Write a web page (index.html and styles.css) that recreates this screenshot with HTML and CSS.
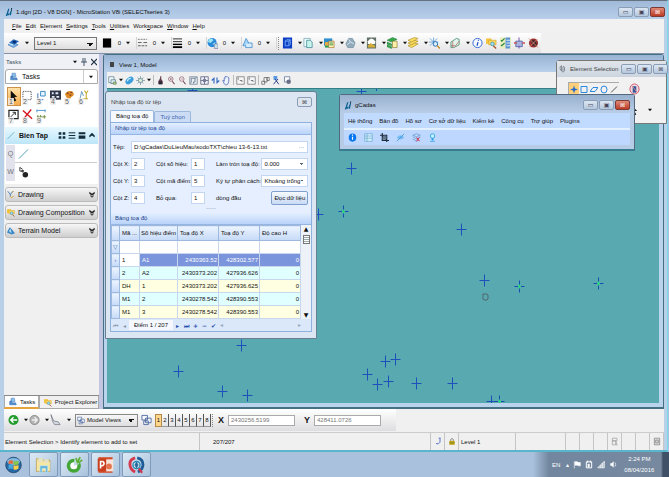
FILE: index.html
```html
<!DOCTYPE html>
<html lang="vi">
<head>
<meta charset="utf-8">
<title>1.dgn [2D - V8 DGN] - MicroStation V8i (SELECTseries 3)</title>
<link rel="stylesheet" href="styles.css">
</head>
<body>
<svg class="sprite" aria-hidden="true">
  <symbol id="logo" viewBox="0 0 10 10"><path d="M1 10 4 1h1.500L3.800 7h1.700L9 0 7.500 9H6L6.500 5.500 5 9H3L2.500 10z" fill="#075f94"/><path d="M7.500 0H9L7.500 5z" fill="#18384d"/></symbol>
  <symbol id="level" viewBox="0 0 12 12"><path d="M0 8 5 5l6 3-5 3z" fill="#7db3e6" stroke="#2c68ad" stroke-width=".6"/><path d="M1 6 6 2l6 2-5 4z" fill="#2368ba"/><path d="M5 4q3-1 4 1-2 2-3 1z" fill="#072a64"/><path d="m1 6 4 1 1 2-5-2z" fill="#d7edff"/></symbol>
  <symbol id="black" viewBox="0 0 12 12"><path d="M1 1h9v10H1z" fill="#000"/></symbol>
  <symbol id="dashes" viewBox="0 0 12 12"><path d="M1 2h10" stroke="#777" stroke-dasharray="2 1"/><path d="M1 5.500h10" stroke="#555" stroke-dasharray="4 2"/><path d="M1 9h10" stroke="#555" stroke-dasharray="3 1"/></symbol>
  <symbol id="weights" viewBox="0 0 12 12"><path d="M1 1.500h10M1 4.500h10" stroke="#222"/><path d="M1 7.500h10" stroke="#000" stroke-width="1.500"/><path d="M1 10.500h10" stroke="#000" stroke-width="2"/></symbol>
  <symbol id="globe" viewBox="0 0 12 12"><circle cx="5.500" cy="5.500" r="5" fill="#2a88d8"/><path d="M2 2q4-2 5 1L4 6 1 5zM6 7l3-2v4z" fill="#9be4f2"/><path d="M8 7h4v5H8z" fill="#c8dfe8" stroke="#558" stroke-width=".5"/></symbol>
  <symbol id="tri" viewBox="0 0 12 12"><path d="M4.500 1 9 9H1z" fill="#a5d6f8" stroke="#3a85c8" stroke-width=".8"/><path d="M6 6h5v5H4V9" fill="#d5ecff" stroke="#3a85c8" stroke-width=".8"/></symbol>
  <symbol id="cube" viewBox="0 0 12 12"><path d="M1 0h10v12H1z" fill="#0c3fc4"/><path d="M3.500 4h4v5h-4zl1.500-1.500h4v5L7.500 9M7.500 4 9 2.500" fill="none" stroke="#8fc1ff" stroke-width=".8"/></symbol>
  <symbol id="doc" viewBox="0 0 12 12"><path d="M1 1h7v9H1z" fill="#eff" stroke="#69a" stroke-width=".7"/><path d="M4 3h4l2 2v6H4z" fill="#c7f5ee" stroke="#397f90" stroke-width=".8"/></symbol>
  <symbol id="chart" viewBox="0 0 12 12"><path d="M0 1h9v8H0z" fill="#2b8fd0"/><path d="M1 5h4v4H1z" fill="#e8a93b"/><path d="M5 4h6v7H5z" fill="#fff3b0" stroke="#a06a22" stroke-width=".7"/><path d="M6 6h4M6 8h4" stroke="#2c8a48"/><path d="M1 10h4" stroke="#2c9b50" stroke-width="2"/></symbol>
  <symbol id="poly" viewBox="0 0 12 12"><path d="M4 1h4l3 5-2 5H3L1 7z" fill="#92acbd" stroke="#668398" stroke-width=".7"/><path d="m4 2 2 3-4 3M6 5l4 2" fill="none" stroke="#d8e5ed"/></symbol>
  <symbol id="photo" viewBox="0 0 12 12"><path d="M1 0h10v12H1z" fill="#607064"/><path d="M2 4q4-6 8 0v3H2z" fill="#fff"/><path d="m2 9 3-3 5 3v2H2z" fill="#d4ad3a"/></symbol>
  <symbol id="gstack" viewBox="0 0 12 12"><path d="m0 3 6-3 5 2-6 3zM0 5l5 2v2L0 7zM0 8l5 2v2l-5-2z" fill="#35a847" stroke="#167235" stroke-width=".5"/><path d="M6 4h5v7H6z" fill="#fff1a9" stroke="#807627" stroke-width=".7"/></symbol>
  <symbol id="ystack" viewBox="0 0 12 12"><g fill="#f5de61" stroke="#b28b22" stroke-width=".7"><path d="m0 9 7-3 4 1-7 4z"/><path d="m0 6 7-3 4 1-7 4z"/><path d="m0 3 7-3 4 1-7 4z"/></g></symbol>
  <symbol id="spark" viewBox="0 0 12 12"><path d="M5 0v9M0 5h10M1 1l8 8M9 1 1 9" stroke="#4d94d3" stroke-width=".8"/><circle cx="7" cy="7" r="2.500" fill="#d9efff" stroke="#246aae"/><path d="m9 9 3 3" stroke="#c28b2a" stroke-width="1.500"/></symbol>
  <symbol id="gpage" viewBox="0 0 12 12"><path d="m1 5 6-4 3 1v6l-6 3H1z" fill="#e4f4ec" stroke="#358461" stroke-width=".8"/><path d="M1 9h5l4-5M3 4v7" fill="none" stroke="#ac615d" stroke-width=".8"/></symbol>
  <symbol id="info" viewBox="0 0 12 12"><circle cx="6" cy="6" r="5" fill="#f6faff" stroke="#2d62cf"/><path d="M6.500 5 5.500 9M7 2.500v1" stroke="#2456c0" stroke-width="1.400"/></symbol>
  <symbol id="folders" viewBox="0 0 12 12"><path d="M0 1h6v6H0z" fill="#f2c642"/><path d="M3 3h8v5H3z" fill="#ffdb62" stroke="#d29921" stroke-width=".6"/><circle cx="7" cy="7" r="2" fill="#9be1f5" stroke="#3883a1" stroke-width=".7"/><path d="m8 9 3 3" stroke="#a7552c" stroke-width="1.400"/></symbol>
  <symbol id="tasksheet" viewBox="0 0 12 12"><path d="M0 0h12v12H0z" fill="#e9efbf"/><path d="M6 0h5v12H6z" fill="#5d94d2"/><path d="m1 3 1 1 3-3M1 8l1 1 3-3" fill="none" stroke="#268638" stroke-width="1.200"/><path d="M7 3h4M7 6h4M7 9h4" stroke="#eaf5ff"/></symbol>
  <symbol id="cross3" viewBox="0 0 12 12"><path d="M2 4h7v6H2z" fill="#a9b4e0" stroke="#596cab"/><path d="M5.500 0v4M5.500 9v3" stroke="#6a48b0"/><path d="M0 6h3M9 6h3" stroke="#cc4f4f" stroke-width="1.500"/></symbol>
  <symbol id="noflag" viewBox="0 0 12 12"><circle cx="6" cy="6" r="5" fill="#9a3131"/><path d="M3 3h5l2 6H5z" fill="#392525"/><path d="m1 1 10 10M2 10l8-8" stroke="#e58679"/></symbol>
  <symbol id="pages" viewBox="0 0 12 12"><path d="M1 1h7v8H1z" fill="#f4f9fc" stroke="#3a6577" stroke-width=".8"/><path d="M4 5h6v5H4z" fill="#dfeef4" stroke="#3a6577" stroke-width=".8"/><path d="M7 8h4v3H7z" fill="#a9cf8a" stroke="#57714a" stroke-width=".7"/></symbol>
  <symbol id="sphere" viewBox="0 0 12 12"><ellipse cx="6" cy="6" rx="6" ry="4" transform="rotate(-40 6 6)" fill="#3c9ddd"/><path d="M3 7q1-4 5-4" stroke="#c5edff" stroke-width="1.500" fill="none"/></symbol>
  <symbol id="sun" viewBox="0 0 12 12"><path d="M6 0v12M0 6h12M2 2l8 8M10 2l-8 8" stroke="#567d91" stroke-width=".8"/><circle cx="6" cy="6" r="2.700" fill="#e8eed2" stroke="#4f829b"/></symbol>
  <symbol id="brush" viewBox="0 0 12 12"><path d="M6 0h1v4l2 3v4H3V7l2-3z" fill="#653d4c"/><path d="M4 7h4v4H4z" fill="#262b3a"/></symbol>
  <symbol id="magin" viewBox="0 0 12 12"><circle cx="5" cy="4" r="3" fill="#fff" stroke="#8b5866"/><path d="M3.500 4h3M5 2.500v3" stroke="#754257" stroke-width=".8"/><path d="m7 7 3 4" stroke="#754257" stroke-width="1.500"/></symbol>
  <symbol id="magout" viewBox="0 0 12 12"><circle cx="5" cy="4" r="3" fill="#fff" stroke="#8b5866"/><path d="M3.500 4h3" stroke="#754257" stroke-width=".8"/><path d="m7 7 3 4" stroke="#754257" stroke-width="1.500"/></symbol>
  <symbol id="fit" viewBox="0 0 12 12"><path d="M1 1h10v10H1z" fill="#e9eef2" stroke="#526779" stroke-width=".8"/><path d="M3 8V3h5v5H6v2M8 3l2-1M3 8 2 10" fill="none" stroke="#415b72" stroke-width=".9"/></symbol>
  <symbol id="grid4" viewBox="0 0 12 12"><path d="M1 1h10v10H1zM6 1v10M1 6h10" fill="#edf2f8" stroke="#555875"/><path d="M4 4h4v4H4z" fill="#777b9c"/></symbol>
  <symbol id="rot" viewBox="0 0 12 12"><path d="M4 10V3L1 6M8 2v7l3-3" fill="none" stroke="#2e65c0" stroke-width="1.500"/></symbol>
  <symbol id="hand" viewBox="0 0 12 12"><path d="M3 7V3q1-1 1 0V1q1-1 2 0 1-1 2 1 2 0 1 2v4q-1 4-4 4-2 0-4-6 1-1 2 1z" fill="#eef4ff" stroke="#3755aa" stroke-width=".9"/></symbol>
  <symbol id="cam" viewBox="0 0 12 12"><path d="M1 1h10v10H1z" fill="#f5f7f9" stroke="#555" stroke-width=".8"/><path d="M3 2v3M5 6h3v2" fill="none" stroke="#555"/></symbol>
  <symbol id="copyv" viewBox="0 0 12 12"><path d="M1 7h4v4H1zM4 2h4v6H4zM8 2h3v4H8z" fill="#f4f4f4" stroke="#444" stroke-width=".8"/></symbol>
  <symbol id="clip" viewBox="0 0 12 12"><path d="M2 0h5v5H2z" fill="#5a99df"/><path d="m4 4 5 7M8 4l-6 7" stroke="#293e89" stroke-width="1.300"/></symbol>
  <symbol id="maskv" viewBox="0 0 12 12"><path d="M2 1h7v7H2z" fill="#fff" stroke="#577293"/><circle cx="7.500" cy="7.500" r="3" fill="#6a6f89"/></symbol>
  <symbol id="inbox" viewBox="0 0 12 12"><path d="M3 1h5l1 5H3z" fill="#8bbdea" stroke="#3975b4" stroke-width=".7"/><path d="m1 6 2-1 2 3h5l1 3H1z" fill="#4e8fd2" stroke="#2b5d9d" stroke-width=".7"/></symbol>
  <symbol id="arrow" viewBox="0 0 12 12"><path d="M3 0v10l2-2 2 4 2-1-2-4h3z" fill="#111"/></symbol>
  <symbol id="marquee" viewBox="0 0 12 12"><path d="M1 1h9v9H1z" fill="none" stroke="#333" stroke-dasharray="1 1"/></symbol>
  <symbol id="move" viewBox="0 0 12 12"><path d="M5 1h5v5H5z" fill="#e5f4ff" stroke="#3687c0"/><path d="M2 3v7h6" fill="none" stroke="#3466a9"/></symbol>
  <symbol id="arr" viewBox="0 0 12 12"><path d="M0 0h12v10H0z" fill="#2e3448"/><path d="M2 2h2v2H2zm4 0h3v2H6zM2 6h3v2H2zm5 0h3v2H7z" fill="#e5e8f2"/></symbol>
  <symbol id="palette" viewBox="0 0 12 12"><path d="M1 4q3-5 8-3 4 4-1 6L6 10 3 8z" fill="#df8b25"/><path d="M3 3h2M7 2h2M8 5H6" stroke="#813a25" stroke-width="1.500"/></symbol>
  <symbol id="vary" viewBox="0 0 12 12"><path d="m2 10 2-9 2 5" fill="none" stroke="#6098be"/><path d="M7 0l2 3 2-3M9 3v6M5 9h6" stroke="#c5ab33" fill="none" stroke-width="1.200"/></symbol>
  <symbol id="resize" viewBox="0 0 12 12"><path d="M1 1h10v9H1z" fill="#fff" stroke="#222" stroke-width="1.300"/><path d="m3 8 5-5M5 3h3v3" fill="none" stroke="#222"/></symbol>
  <symbol id="redx" viewBox="0 0 12 12"><path d="m1 1 10 9M10 0 2 10" stroke="#d4141e" stroke-width="1.500"/></symbol>
  <symbol id="measure" viewBox="0 0 12 12"><path d="M1 1h9M1 0v3M10 0v3" stroke="#4b91cb"/><path d="M1 8h10M2 6v4M5 6v4M9 6v4" stroke="#6e8c3c"/></symbol>
  <symbol id="line" viewBox="0 0 12 12"><path d="m1 11 10-10" stroke="#3f9aaa"/></symbol>
  <symbol id="cells" viewBox="0 0 12 12"><path d="M2 1v4h3M2 1l3 2" fill="none" stroke="#333"/><ellipse cx="8" cy="9" rx="3" ry="3" fill="#222"/><circle cx="5" cy="5" r="1.500" fill="#444"/></symbol>
  <symbol id="tiles" viewBox="0 0 12 12"><path d="M1 1h4v4H1zm6 0h4v4H7zM1 7h4v4H1zm6 0h4v4H7z" fill="#122b3b"/></symbol>
  <symbol id="rows" viewBox="0 0 12 12"><path d="M1 2h10M1 6h10M1 10h10" stroke="#122b3b" stroke-width="1.500"/></symbol>
  <symbol id="bars" viewBox="0 0 12 12"><path d="M1 1h10v3H1zm0 5h10v5H1z" fill="#122b3b"/></symbol>
  <symbol id="chevup" viewBox="0 0 12 12"><path d="M2 9V6l4-4 4 4v3L6 6z" fill="#122b3b"/></symbol>
  <symbol id="chevdn" viewBox="0 0 12 12"><path d="M2 2v3l4 3 4-3V2L6 5zM3 7v1l3 3 3-3V7L6 9z" fill="#222"/></symbol>
  <symbol id="pencil" viewBox="0 0 12 12"><path d="m1 1 4 5 4-5M5 5v4" fill="none" stroke="#5687b8" stroke-width="1.500"/><path d="m8 3 2-2M5 9l2 2 3-3" fill="none" stroke="#d7a51d" stroke-width="1.500"/></symbol>
  <symbol id="terrain" viewBox="0 0 12 12"><path d="m0 9 4-8 3 3 5 6-5 2z" fill="#3987c5"/><path d="m3 7 2-4 2 7z" fill="#bfe2f2"/></symbol>
  <symbol id="back" viewBox="0 0 12 12"><circle cx="6" cy="6" r="5.500" fill="#249c2d"/><path d="M10 6H3m3-3L3 6l3 3" fill="none" stroke="#fff" stroke-width="1.500"/></symbol>
  <symbol id="fwd" viewBox="0 0 12 12"><circle cx="6" cy="6" r="5" fill="#b4b4b4" stroke="#888"/><path d="M3 6h6M6 3l3 3-3 3" fill="none" stroke="#eee" stroke-width="1.500"/></symbol>
  <symbol id="pen" viewBox="0 0 12 12"><path d="m1 0 3 7 5 1 2 3H5L3 8z" fill="#d5d8df" stroke="#646a7a" stroke-width=".7"/></symbol>
  <symbol id="views" viewBox="0 0 12 12"><path d="M1 1h6v5H1zM5 4h6v5H5zM3 7h5v4H3z" fill="#f6f9fc" stroke="#435e99" stroke-width=".9"/></symbol>
  <symbol id="bluei" viewBox="0 0 12 12"><ellipse cx="6" cy="6" rx="5" ry="5.500" fill="#0877ee"/><path d="M6 5v4M6 2v1.500" stroke="#fff" stroke-width="1.500"/></symbol>
  <symbol id="sheet" viewBox="0 0 12 12"><path d="M1 1h10v10H1zM1 4h10M1 7h10M4 1v10" fill="#d8f1ff" stroke="#4793bd" stroke-width=".7"/></symbol>
  <symbol id="plan" viewBox="0 0 12 12"><path d="M3 0v10h9M0 3h9v9M3 3l5 6" fill="none" stroke="#1f2d3b" stroke-width="1.500"/><path d="M4 4h4v5H4z" fill="#61798e"/></symbol>
  <symbol id="eye" viewBox="0 0 12 12"><path d="M1 6q5-6 10 0-5 5-10 0z" fill="#77bdf3"/><path d="M1 11 11 1" stroke="#368dd3"/></symbol>
  <symbol id="layerx" viewBox="0 0 12 12"><path d="m1 3 5-2 5 2-5 2zM1 5l5 3 5-3M1 8l5 3 2-1" fill="none" stroke="#558fbd" stroke-width=".8"/><path d="m6 6 4 5m0-5-4 5" stroke="#d92945" stroke-width="1.300"/></symbol>
  <symbol id="pin" viewBox="0 0 12 12"><circle cx="6" cy="4" r="3" fill="#c7efff" stroke="#139be1"/><path d="M6 7v3M3 11h6M4 8h4" stroke="#139be1"/></symbol>
  <symbol id="lock" viewBox="0 0 12 12"><path d="M4 5V3q2-3 4 0v2" fill="none" stroke="#555"/><path d="M2 5h8v6H2z" fill="#c1a51d"/><path d="M2 8h8" stroke="#6d721e"/></symbol>
  <symbol id="hook" viewBox="0 0 12 12"><path d="M9 1v6q-2 4-6 2M7 1h3" fill="none" stroke="#5d76c8" stroke-width="1.500"/></symbol>
  <symbol id="disk" viewBox="0 0 12 12"><path d="M2 1h7v4H2zM2 5h5v6H2zM8 6v5h2" fill="#eee" stroke="#999"/></symbol>
  <symbol id="clipx" viewBox="0 0 10 12"><path d="M3 1v7q2 3 4 0V3q-2-3-2 0v5M3 1q-2 0-2 4l2 3" fill="none" stroke="#6f7680"/></symbol>
  <symbol id="noselect" viewBox="0 0 12 12"><ellipse cx="6" cy="6" rx="5" ry="5.500" fill="#f3dce4" stroke="#cb5362"/><path d="M4 3h4v7H4z" fill="#315a9c"/><path d="m3 2 6 8" stroke="#dd7f7f"/></symbol>
  <symbol id="caret" viewBox="0 0 6 6"><path d="M0 1h6L3 5z" fill="#111"/></symbol>
  <symbol id="bin" viewBox="0 0 12 12"><path d="M2 1h8v10H2zM4 4h4v4H4z" fill="#ddd" stroke="#777"/></symbol>
  <symbol id="winorb" viewBox="0 0 24 24"><circle cx="12" cy="12" r="11" fill="#2769a4" stroke="#183b65"/><ellipse cx="12" cy="7" rx="9" ry="5" fill="#80badd"/><path d="M5 7q3-3 6-1v5q-3-2-6 0z" fill="#ee6638"/><path d="M12 6q3 2 7 0v5q-4 2-7 0z" fill="#87c448"/><path d="M5 12q3-2 6 0v6q-3-2-6 0z" fill="#48a9e0"/><path d="M12 12q3 2 7 0v5q-4 3-7 1z" fill="#fad049"/></symbol>
  <symbol id="explorer" viewBox="0 0 24 24"><path d="M2 3h8l2 2h9v16H2z" fill="#f0dda0" stroke="#b89b4c"/><path d="M3 8h18v12H3z" fill="#f8e7a0"/><path d="M5 2h6v6H5zM13 4h6v5h-6z" fill="#e4e3c5"/><path d="M7 13h11v10h-3v-6h-5v6H7z" fill="#64b3d9" stroke="#c1e8f5"/></symbol>
  <symbol id="coccoc" viewBox="0 0 24 24"><circle cx="11" cy="13" r="10" fill="#45a638"/><circle cx="11" cy="13" r="5" fill="#fff"/><path d="m11 13 1-11h10l-4 9z" fill="#c2dce8"/><path d="m14 2 2 6 4-7M17 9l6-4" fill="none" stroke="#62b13b" stroke-width="2.500"/></symbol>
  <symbol id="ppt" viewBox="0 0 24 24"><path d="M2 1h20v22H2z" fill="#d54d28"/><path d="M12 4h11v17H12z" fill="#f6e4da"/><circle cx="17" cy="14" r="4" fill="#e4744e"/><path d="M1 3h12v18H1z" fill="#c83e1e"/><path d="M5 17V7h3q4 3 0 6H5" fill="none" stroke="#fff" stroke-width="2.300"/></symbol>
  <symbol id="viewer" viewBox="0 0 24 24"><path d="M10 2Q1 5 3 13q1 6 7 9" fill="none" stroke="#d4394e" stroke-width="4"/><path d="M13 2q9 2 8 11-1 6-7 9" fill="none" stroke="#1f5b97" stroke-width="4"/><circle cx="12" cy="12" r="5" fill="#e9f1f6" stroke="#248bb5" stroke-width="2"/><path d="m12 7 3 5-3 5-3-5z" fill="#276b9f"/><path d="m15 17 5 6" stroke="#d4394e" stroke-width="3"/></symbol>
  <symbol id="flag" viewBox="0 0 12 12"><path d="M2 1v11M3 2h4l1 1h3v5H8L7 7H3z" fill="#fff" stroke="#f5f8fa"/></symbol>
  <symbol id="plug" viewBox="0 0 12 12"><path d="M2 2h8v9H2zM4 0v3M8 0v3" fill="none" stroke="#fff" stroke-width="1.500"/><path d="M4 5h3v5H4z" fill="#fff"/></symbol>
  <symbol id="signal" viewBox="0 0 12 12"><path d="M1 11h10V1z" fill="#b6c1cc" stroke="#fff"/><path d="M5 7v4M8 4v7" stroke="#fff"/></symbol>
  <symbol id="sound" viewBox="0 0 12 12"><path d="M2 4h2l3-3v10L4 8H2z" fill="#fff"/><path d="M9 3q2 3 0 6" fill="none" stroke="#fff"/></symbol>
</svg>

<main class="app">
  <header class="titlebar">
    <svg class="ico"><use href="#logo"/></svg><h1>1.dgn [2D - V8 DGN] - MicroStation V8i (SELECTseries 3)</h1>
    <div class="winbtns"><button aria-label="Minimize">▭</button><button aria-label="Restore">▣</button><button class="close" aria-label="Close">⊠</button></div>
  </header>
  <nav class="menubar">
    <button><u>F</u>ile</button><button><u>E</u>dit</button><button>E<u>l</u>ement</button><button><u>S</u>ettings</button><button><u>T</u>ools</button><button><u>U</u>tilities</button><button>Work<u>s</u>pace</button><button><u>W</u>indow</button><button><u>H</u>elp</button>
  </nav>
  <div class="toolrow"><div class="toolbar">
    <span class="drop lead"><svg class="ico"><use href="#level"/></svg><svg class="caret"><use href="#caret"/></svg></span>
    <select class="level-select" aria-label="Level"><option>Level 1</option></select>
    <span class="attr"><svg class="ico"><use href="#black"/></svg>0<svg class="caret"><use href="#caret"/></svg></span>
    <span class="attr"><svg class="ico"><use href="#dashes"/></svg>0<svg class="caret"><use href="#caret"/></svg></span>
    <span class="attr"><svg class="ico"><use href="#weights"/></svg>0<svg class="caret"><use href="#caret"/></svg></span>
    <span class="attr"><svg class="ico"><use href="#globe"/></svg>0<svg class="caret"><use href="#caret"/></svg></span>
    <span class="attr"><svg class="ico"><use href="#tri"/></svg>0<svg class="caret"><use href="#caret"/></svg></span>
    <i class="grip"></i>
    <span class="drop"><svg class="ico"><use href="#cube"/></svg><svg class="caret"><use href="#caret"/></svg></span>
    <span class="drop"><svg class="ico"><use href="#doc"/></svg><svg class="caret"><use href="#caret"/></svg></span>
    <span class="drop"><svg class="ico"><use href="#chart"/></svg><svg class="caret"><use href="#caret"/></svg></span>
    <span class="drop"><svg class="ico"><use href="#poly"/></svg><svg class="caret"><use href="#caret"/></svg></span>
    <span class="drop"><svg class="ico"><use href="#photo"/></svg><svg class="caret"><use href="#caret"/></svg></span>
    <span class="drop"><svg class="ico"><use href="#gstack"/></svg><svg class="caret"><use href="#caret"/></svg></span>
    <span class="drop"><svg class="ico"><use href="#ystack"/></svg><svg class="caret"><use href="#caret"/></svg></span>
    <span class="drop"><svg class="ico"><use href="#spark"/></svg><svg class="caret"><use href="#caret"/></svg></span>
    <span class="drop"><svg class="ico"><use href="#gpage"/></svg><svg class="caret"><use href="#caret"/></svg></span>
    <span class="single"><svg class="ico"><use href="#info"/></svg><svg class="ico"><use href="#folders"/></svg><svg class="ico"><use href="#tasksheet"/></svg><svg class="ico"><use href="#cross3"/></svg><svg class="ico"><use href="#noflag"/></svg></span>
  </div></div>

  <section class="workspace">
    <aside class="tasks">
      <div class="pane-head"><span>Tasks</span><svg class="caret"><use href="#caret"/></svg><svg class="pinicon" viewBox="0 0 6 8"><path d="M2 0v4M4 0v4M0 4h6M3 4v4" stroke="#456"/></svg><svg class="pinicon" viewBox="0 0 6 8"><path d="m0 1 6 6m0-6L0 7" stroke="#234" stroke-width="1.200"/></svg></div>
      <div class="combo"><svg class="ico sm"><use href="#inbox"/></svg><span>Tasks</span><button aria-label="Choose task"><svg class="caret"><use href="#caret"/></svg></button></div>
      <div class="palette">
        <button class="on"><svg class="ico"><use href="#arrow"/></svg><i>1</i></button><button><svg class="ico"><use href="#marquee"/></svg><i>2</i></button><button><svg class="ico"><use href="#move"/></svg><i>3</i></button><button><svg class="ico"><use href="#arr"/></svg><i>4</i></button><button><svg class="ico"><use href="#palette"/></svg><i>5</i></button><button><svg class="ico"><use href="#vary"/></svg><i>6</i></button><button><svg class="ico"><use href="#resize"/></svg><i>7</i></button><button><svg class="ico"><use href="#redx"/></svg><i>8</i></button><button><svg class="ico"><use href="#measure"/></svg><i>9</i></button>
      </div>
      <div class="group-head"><svg class="ico sm"><use href="#line"/></svg><b>Bien Tap</b><svg class="ico sm"><use href="#tiles"/></svg><svg class="ico sm"><use href="#rows"/></svg><svg class="ico sm"><use href="#bars"/></svg><svg class="ico sm"><use href="#chevup"/></svg></div>
      <div class="keys"><div><kbd>Q</kbd><svg class="ico"><use href="#line"/></svg></div><div><kbd>W</kbd><svg class="ico"><use href="#cells"/></svg></div></div>
      <button class="acc"><svg class="ico sm"><use href="#pencil"/></svg><span>Drawing</span><svg class="ico sm"><use href="#chevdn"/></svg></button>
      <button class="acc"><svg class="ico sm"><use href="#folders"/></svg><span>Drawing Composition</span><svg class="ico sm"><use href="#chevdn"/></svg></button>
      <button class="acc"><svg class="ico sm"><use href="#terrain"/></svg><span>Terrain Model</span><svg class="ico sm"><use href="#chevdn"/></svg></button>
      <div class="pane-tabs"><button class="on"><svg class="ico sm"><use href="#inbox"/></svg>Tasks</button><button><svg class="ico sm"><use href="#folders"/></svg>Project Explorer</button></div>
    </aside>

    <section class="view">
      <h2>View 1, Model</h2>
      <div class="viewtools">
        <svg class="ico"><use href="#pages"/></svg><svg class="caret"><use href="#caret"/></svg><svg class="ico"><use href="#sphere"/></svg><svg class="ico"><use href="#sun"/></svg><svg class="caret"><use href="#caret"/></svg><i class="sep"></i><svg class="ico"><use href="#brush"/></svg><svg class="ico"><use href="#magin"/></svg><svg class="ico"><use href="#magout"/></svg><svg class="ico"><use href="#fit"/></svg><svg class="ico"><use href="#grid4"/></svg><svg class="ico"><use href="#rot"/></svg><svg class="ico"><use href="#hand"/></svg><i class="sep"></i><svg class="ico"><use href="#cam"/></svg><svg class="ico"><use href="#cam"/></svg><i class="sep"></i><svg class="ico"><use href="#copyv"/></svg><svg class="ico"><use href="#clip"/></svg><svg class="ico"><use href="#maskv"/></svg>
      </div>
      <svg class="canvas" aria-label="Survey points">
        <defs><g id="p"><path d="M0-6V6M-5 0H5" stroke="#1e50bb"/></g><g id="g"><path d="M0-6V6M-5 0H5" stroke="#174fae"/><path d="M-1.500 0h3M0-2v4" stroke="#25dc78"/></g></defs>
        <use href="#p" x="85.500" y="1.500"/><use href="#p" x="254.500" y="2.500"/><path d="M269.500 0v2" stroke="#1e50bb"/>
        <use href="#p" x="244.500" y="79.500"/><use href="#p" x="211.500" y="125.500"/><use href="#g" x="236.500" y="122.500"/><use href="#p" x="354.500" y="140.500"/><use href="#p" x="377.500" y="191.500"/><use href="#g" x="412.500" y="197.500"/><use href="#g" x="491.500" y="194.500"/>
        <path d="M376 205h4l1 1v4l-1 1h-3l-1-1z" fill="none" stroke="#53676c"/>
        <use href="#p" x="278.500" y="272.500"/><use href="#p" x="288.500" y="270.500"/><use href="#p" x="260.500" y="285.500"/><use href="#p" x="270.500" y="295.500"/><use href="#p" x="281.500" y="292.500"/><use href="#p" x="309.500" y="294.500"/><use href="#p" x="345.500" y="294.500"/><use href="#p" x="384.500" y="312.500"/><use href="#g" x="392.500" y="312.500"/>
        <use href="#p" x="134.500" y="256.500"/><use href="#p" x="71.500" y="282.500"/><use href="#p" x="115.500" y="302.500"/><use href="#p" x="140.500" y="306.500"/>
      </svg>
    </section>
  </section>

  <div class="navrow"><div class="navbar">
    <span class="drop"><svg class="ico"><use href="#back"/></svg><svg class="caret"><use href="#caret"/></svg></span><span class="drop"><svg class="ico"><use href="#fwd"/></svg><svg class="caret"><use href="#caret"/></svg></span><span class="drop lead"><svg class="ico"><use href="#pen"/></svg><svg class="caret"><use href="#caret"/></svg></span>
    <span class="modelviews"><svg class="ico sm"><use href="#views"/></svg><select aria-label="Model Views"><option>Model Views</option></select></span>
    <svg class="ico viewsicon"><use href="#views"/></svg>
    <span class="viewnums"><button class="on">1</button><button>2</button><button>3</button><button>4</button><button>5</button><button>6</button><button>7</button><button>8</button></span>
    <i class="grip"></i>
    <label for="cx">X</label><input id="cx" value="2430256.5199"><label for="cy">Y</label><input id="cy" value="428411.0726">
  </div></div>
  <footer class="status"><span class="msg">Element Selection &gt; Identify element to add to set</span><span class="count">207/207</span><span><svg class="ico sm"><use href="#hook"/></svg></span><span><svg class="ico sm"><use href="#lock"/></svg></span><span class="lv">Level 1</span><span class="wide"></span><span></span><span></span><span></span><span><svg class="ico sm"><use href="#disk"/></svg></span><span></span><span></span><span><svg class="ico sm"><use href="#bin"/></svg></span></footer>
</main>

<footer class="taskbar">
  <button class="orb" aria-label="Start"><svg><use href="#winorb"/></svg></button><button class="task" aria-label="Explorer"><svg><use href="#explorer"/></svg></button><button class="task" aria-label="Browser"><svg><use href="#coccoc"/></svg></button><button class="task" aria-label="PowerPoint"><svg><use href="#ppt"/></svg></button><button class="task" aria-label="Viewer"><svg><use href="#viewer"/></svg></button>
  <div class="tray"><span class="lang">EN</span><span>▴</span><svg class="ico sm"><use href="#flag"/></svg><svg class="ico sm"><use href="#plug"/></svg><svg class="ico sm"><use href="#signal"/></svg><svg class="ico sm"><use href="#sound"/></svg><time>2:24 PM<br>08/04/2016</time></div>
</footer>

<section class="win selection">
  <header><svg class="ico sm"><use href="#clipx"/></svg><h2>Element Selection</h2><div class="winbtns"><button aria-label="Minimize">▭</button><button aria-label="Restore">▣</button><button aria-label="Close">⊠</button></div></header>
  <div class="selbody"><div class="modes"><button class="on" aria-label="Individual"><svg viewBox="0 0 8 8"><path d="m4 0 1 3 3 1-3 1-1 3-1-3-3-1 3-1z" fill="#276dc8"/></svg></button><button aria-label="Block"><svg viewBox="0 0 8 8"><path d="M1 1h6v6H1z" fill="none" stroke="#2987dc"/></svg></button><button aria-label="Shape"><svg viewBox="0 0 8 8"><path d="M3 2h5L5 6H0z" fill="none" stroke="#2987dc"/></svg></button><button aria-label="Circle"><svg viewBox="0 0 8 8"><ellipse cx="4" cy="4" rx="3" ry="3.500" fill="none" stroke="#2987dc"/></svg></button><button aria-label="Line"><svg viewBox="0 0 8 8"><path d="m1 7 6-6" stroke="#555"/></svg></button></div><svg class="ico nosel"><use href="#noselect"/></svg></div>
  <div class="selmore"><svg class="ico"><use href="#arrow"/></svg><svg class="caret"><use href="#caret"/></svg></div>
</section>

<section class="win gcadas">
  <header><svg class="ico sm"><use href="#logo"/></svg><h2>gCadas</h2><div class="winbtns"><button aria-label="Minimize">▭</button><button aria-label="Restore">▣</button><button class="close" aria-label="Close">⊠</button></div></header>
  <nav><button>Hệ thống</button><button>Bản đồ</button><button>Hồ sơ</button><button>Cơ sở dữ liệu</button><button>Kiểm kê</button><button>Công cụ</button><button>Trợ giúp</button><button>Plugins</button></nav>
  <div class="gtools"><svg class="ico"><use href="#bluei"/></svg><svg class="ico"><use href="#sheet"/></svg><svg class="ico"><use href="#plan"/></svg><svg class="ico"><use href="#eye"/></svg><svg class="ico"><use href="#layerx"/></svg><svg class="ico"><use href="#pin"/></svg></div>
</section>

<section class="win import">
  <header><h2>Nhập toạ độ từ tệp</h2><div class="winbtns"><button aria-label="Close">⊠</button></div></header>
  <div class="tabs"><button class="on">Bảng toạ độ</button><button>Tuỳ chọn</button></div>
  <div class="page">
    <h3>Nhập từ tệp toạ độ</h3>
    <form>
      <label for="f">Tệp:</label><span class="file"><input id="f" value="D:\gCadas\DuLieuMau\sodoTXT\chieu 13-6-13.txt"><button type="button">···</button></span>
      <label for="x">Cột X:</label><input id="x" value="2"><label class="next" for="sh">Cột số hiệu:</label><input id="sh" value="1"><label class="next" for="lt">Làm tròn toạ độ:</label><select id="lt"><option>0.000</option></select>
      <label for="y">Cột Y:</label><input id="y" value="3"><label class="next" for="md">Cột mã điểm:</label><input id="md" value="5"><label class="next" for="kt">Ký tự phân cách:</label><select id="kt"><option>Khoảng trống</option></select>
      <label for="z">Cột Z:</label><input id="z" value="4"><label class="next" for="bq">Bỏ qua:</label><input id="bq" value="1"><span class="next">dòng đầu</span><button type="button" class="read">Đọc dữ liệu</button>
    </form>
    <div class="splitter">·····</div>
    <h3>Bảng toạ độ</h3>
    <div class="gridbox">
      <table>
        <colgroup><col class="c0"><col class="c1"><col class="c2"><col class="c3"><col class="c3"><col class="c3"></colgroup>
        <thead><tr><th></th><th>Mã ...</th><th>Số hiệu điểm</th><th>Toạ độ X</th><th>Toạ độ Y</th><th>Độ cao H</th></tr></thead>
        <tbody>
          <tr class="filter"><th>▽</th><td></td><td></td><td></td><td></td><td></td></tr>
          <tr class="sel"><th>›</th><td class="cur">1</td><td>A1</td><td>2430363.52</td><td>428302.577</td><td>0</td></tr>
          <tr class="cy"><th></th><td>2</td><td>A2</td><td>2430373.202</td><td>427936.626</td><td>0</td></tr>
          <tr class="ye"><th></th><td>DH</td><td>1</td><td>2430373.202</td><td>427936.625</td><td>0</td></tr>
          <tr class="cy"><th></th><td>M1</td><td>2</td><td>2430278.542</td><td>428390.553</td><td>0</td></tr>
          <tr class="ye"><th></th><td>M1</td><td>3</td><td>2430278.542</td><td>428390.553</td><td>0</td></tr>
        </tbody>
      </table>
      <div class="vscroll"><span>▲</span><i></i><span class="down">▼</span></div>
    </div>
    <div class="pager"><button>⏮</button><button>◂</button><span>Điểm 1 / 207</span><button class="act">▸</button><button class="act">⏭</button><button class="act">+</button><button class="act">−</button><button class="act">✔</button><div class="hscroll"><span>◂</span><span>▸</span></div></div>
  </div>
</section>
</body>
</html>
```
FILE: styles.css
```css
* { box-sizing: border-box; }
html, body { height: 100%; }
body { margin: 0; display: flex; flex-direction: column; overflow: hidden; position: relative; background: #a9c1dd; color: #111; font: 6px/10px "Liberation Sans", Arial, sans-serif; }
button, input, select { font: inherit; color: inherit; margin: 0; padding: 0; border: 0; border-radius: 0; background: none; min-width: 0; }
select { appearance: none; }
h1, h2, h3 { margin: 0; font-size: 6px; font-weight: normal; white-space: nowrap; }
button, label, span { white-space: nowrap; }
svg { display: block; flex: none; }
.sprite { position: absolute; width: 0; height: 0; }
.ico { width: 11px; height: 12px; }
.sm { width: 8px; height: 9px; }
.caret { width: 4px; height: 4px; }

.app { flex: 1; min-height: 0; display: flex; flex-direction: column; margin-right: 1px; padding: 0 3px 0 4px; background: #b9d0e9; border-top: 1px solid #65727f; border-bottom: 2px solid #58b5cb; border-right: 1px solid #7bdcf1; }
.titlebar { height: 18px; flex: none; display: flex; align-items: center; gap: 3px; margin: 0 -3px 0 -4px; padding: 3px 2px 0 5px; background: linear-gradient(#9fb9d8, #b8cfea); }
.titlebar .ico { width: 8px; height: 10px; }
.winbtns { margin-left: auto; display: flex; gap: 1px; }
.winbtns button { width: 15px; height: 10px; border: 1px solid #8a9db5; border-radius: 2px; background: linear-gradient(#dde7f3, #b4c7de); font: 6px/8px "DejaVu Sans", sans-serif; color: #445; }
.winbtns .close { background: linear-gradient(#de8b79, #bd3b24); color: #fff; border-color: #7c3a34; }
.menubar { height: 14px; flex: none; display: flex; align-items: center; gap: 4px; padding-left: 8px; background: #f1f1f2; }
.toolrow { height: 21px; flex: none; background: #f0f0f0; border-bottom: 1px solid #8393a7; }
.toolbar { width: max-content; height: 20px; display: flex; align-items: center; padding-left: 4px; padding-right: 2px; background: linear-gradient(#fff, #e3e3e5); }
.drop { width: 21px; display: flex; align-items: center; gap: 5px; }
.lead { width: 25px; gap: 6px; }
.level-select { width: 63px; height: 13px; margin: 0 5px 0 1px; padding: 0 2px; border: 1px solid #777; background: linear-gradient(45deg, transparent 50%, #111 50%) right 6px top 5px / 3px 3px no-repeat, linear-gradient(-45deg, transparent 50%, #111 50%) right 3px top 5px / 3px 3px no-repeat, linear-gradient(#f7f7f7, #dedede); }
.attr { width: 35px; display: flex; align-items: center; justify-content: space-between; padding-right: 6px; border-right: 1px solid #d5d5d5; }
.grip { width: 3px; height: 13px; flex: none; border-left: 1px dotted #888; margin: 0 1px; }
.single { display: flex; gap: 3px; margin-left: 1px; }

.workspace { flex: 1; min-height: 0; display: flex; gap: 4px; background: #c2c5e2; }
.tasks { width: 95px; flex: none; display: flex; flex-direction: column; background: #f0f0f1; font-size: 7px; }
.pane-head { height: 15px; display: flex; align-items: center; gap: 4px; padding: 0 2px; color: #456; background: #eff1f6; font-size: 6px; }
.pane-head .caret { margin-left: auto; }
.pinicon { width: 6px; height: 8px; }
.combo { height: 15px; flex: none; display: flex; align-items: center; gap: 4px; padding-left: 4px; margin: 0 1px; border: 1px solid #aaa; border-radius: 3px 3px 0 0; background: #fff; }
.combo button { width: 14px; height: 13px; margin-left: auto; display: grid; place-items: center; border-left: 1px solid #ccc; }
.palette { height: 43px; flex: none; display: grid; grid-template-columns: repeat(6, 14px); grid-auto-rows: 19px; align-content: center; margin: 0 1px; padding-left: 2px; background: #fff; }
.palette button { position: relative; padding: 1px; }
.palette .on { background: linear-gradient(#ffe6b0, #f5a944); outline: 1px solid #cb9148; outline-offset: -1px; }
.palette i { position: absolute; left: 1px; bottom: 1px; padding: 0 1px; background: #eeec; color: #666; font-style: normal; line-height: 7px; }
.group-head { height: 17px; flex: none; display: flex; align-items: center; gap: 2px; margin: 0 1px; padding: 0 2px; background: linear-gradient(#e8f8ff, #bde6f8); }
.group-head b { flex: 1; padding-left: 2px; }
.keys { height: 40px; flex: none; margin: 0 1px 3px; background: #fff; padding: 1px; }
.keys div { display: flex; gap: 3px; align-items: center; height: 18px; padding-right: 2px; }
.keys div:first-child { border-bottom: 1px solid #ccc; }
kbd { width: 9px; height: 18px; font: inherit; line-height: 18px; text-align: center; color: #777; background: #e1e2ec; }
.acc { height: 15px; flex: none; display: flex; align-items: center; gap: 3px; margin: 0 1px 3px; padding: 0 1px; border: 1px solid #bbb; border-radius: 3px; background: linear-gradient(#f6f6f6, #cfcfcf); }
.acc span { flex: 1; text-align: left; }
.pane-tabs { height: 14px; display: flex; margin-top: auto; border-top: 1px solid #888; font-size: 6px; }
.pane-tabs button { display: flex; align-items: center; gap: 3px; padding: 0 4px; border: 1px solid #aaa; border-top: 0; }
.pane-tabs .on { background: #fff; border-bottom: 2px solid #e6a43c; }
.view { flex: 1; min-width: 0; display: flex; flex-direction: column; padding: 0 4px 4px 3px; border: 1px solid #456f83; border-bottom-width: 2px; border-radius: 3px 3px 0 0; background: #b9d3ec; }
.view h2 { height: 17px; flex: none; margin: 0 -4px 0 -3px; padding-left: 6px; line-height: 20px; background: linear-gradient(#98b4d4, #b9d0ea); }
.view h2::before { content: ""; display: inline-block; width: 4px; height: 5px; margin-right: 5px; background: #444; }
.viewtools { height: 16px; flex: none; display: flex; align-items: center; gap: 2px; padding-left: 1px; background: #f0f0f1; }
.viewtools .ico { width: 9px; height: 11px; }
.sep { width: 1px; height: 10px; background: #bbb; }
.canvas { flex: 1; min-height: 0; width: 100%; background: #59a9b0; border-top: 1px solid #347f86; }

.navrow { height: 23px; flex: none; background: #f0f0f0; }
.navbar { width: max-content; height: 22px; display: flex; align-items: center; padding: 0 8px 0 4px; background: linear-gradient(#fff, #dedee0); }
.modelviews { width: 63px; height: 13px; display: flex; align-items: center; padding-left: 1px; border: 1px solid #888; background: linear-gradient(#f7f7f7, #dedede); }
.modelviews select { flex: 1; height: 11px; padding-left: 2px; background: linear-gradient(45deg, transparent 50%, #111 50%) right 6px top 4px / 3px 3px no-repeat, linear-gradient(-45deg, transparent 50%, #111 50%) right 3px top 4px / 3px 3px no-repeat; }
.viewsicon { margin: 0 3px; }
.viewnums { display: flex; }
.viewnums button { width: 7px; height: 13px; border-right: 1px solid #555; border-bottom: 1px solid #999; }
.viewnums .on { background: #ffd68a; border: 1px solid #b28a4c; }
.navbar label { width: 10px; margin-left: 2px; font: bold 9px/12px "Liberation Sans", Arial, sans-serif; color: #111; }
.navbar input { width: 67px; height: 11px; margin-right: 7px; padding-left: 2px; border: 1px solid #aaa; background: #fff; color: #777; }
.status { height: 18px; flex: none; display: flex; background: #f0f0f0; border-top: 1px solid #ccc; }
.status span { width: 14px; display: grid; place-items: center; border-right: 1px solid #c5c5c5; }
.status .msg { width: 196px; justify-content: start; padding-left: 1px; }
.status .count { flex: 1; justify-content: start; padding-left: 13px; }
.status .lv { width: 57px; justify-content: start; padding-left: 2px; }
.status .wide { width: 50px; }

.taskbar { height: 25px; flex: none; display: flex; gap: 2px; background: #a9c1dd; }
.taskbar button { display: grid; place-items: center; }
.taskbar svg:not(.ico) { width: 17px; height: 20px; }
.orb { width: 27px; }
.task { width: 29px; border: 1px solid #809bba; background: linear-gradient(135deg, #dce9f4, #a9c3dd); border-radius: 2px; }
.tray { margin-left: auto; width: 136px; display: flex; align-items: center; gap: 4px; padding-left: 19px; background: linear-gradient(90deg, #a9c1dd, #72869f 16px, #76899f 128px, #405066 130px); color: #fff; }
.lang { margin-right: 2px; }
.tray time { text-align: center; line-height: 11px; margin-left: 3px; }

.win { position: absolute; display: flex; flex-direction: column; border: 1px solid #53697e; border-radius: 3px 3px 0 0; }
.win header { display: flex; align-items: center; gap: 3px; flex: none; }
.selection { left: 556px; top: 60px; width: 111px; height: 64px; background: #f1f1f2; border-color: #777; padding: 0 2px; }
.selection header { height: 16px; margin: 0 -2px; padding: 0 2px; color: #444; background: linear-gradient(#e1e5ea, #ccd5df); }
.selbody { display: flex; align-items: center; gap: 10px; padding: 5px 9px 0; }
.modes { display: flex; border: 1px solid #aaa; border-right: 0; }
.modes button { width: 10px; height: 12px; padding: 1px; }
.modes svg { width: 8px; height: 9px; }
.modes .on { background: #ffcf7b; }
.selmore { display: flex; align-items: center; gap: 9px; margin: 8px 12px 0 auto; }
.gcadas { left: 339px; top: 94px; width: 296px; height: 57px; padding: 0 4px 4px; background: #b6cbe5; border-bottom: 2px solid #397c91; }
.gcadas header { height: 18px; padding: 2px 4px 0; margin: 0 -4px; background: linear-gradient(#98b1ce, #b9cde7); }
.gcadas nav { height: 17px; display: flex; align-items: center; gap: 7px; padding-left: 4px; background: #c1daff; border-bottom: 2px solid #e3f0ff; }
.gtools { flex: 1; display: flex; align-items: center; gap: 7px; padding-left: 4px; background: #bdd7ff; }
.gtools .ico { width: 9px; height: 11px; }
.import { left: 105px; top: 91px; width: 212px; height: 248px; padding: 0 4px 6px; background: #dce6f2; border-color: #687f92; }
.import header { height: 18px; padding: 2px 0 0 1px; color: #444; }
.import header .winbtns button { background: #dce4ed; }
.tabs { display: flex; height: 12px; align-items: flex-end; flex: none; }
.tabs button { height: 11px; padding: 0 5px; line-height: 9px; color: #3862b0; background: #cbdcf4; border: 1px solid #9db8dd; border-bottom: 0; border-radius: 2px 2px 0 0; }
.tabs .on { height: 12px; background: #f5f9ff; color: #111; }
.page { flex: 1; min-height: 0; display: flex; flex-direction: column; border: 1px solid #8eb1dd; background: #e5efff; }
.page h3 { height: 12px; flex: none; padding-left: 4px; line-height: 11px; color: #234389; background: linear-gradient(#e4efff, #b9d3fa); border-bottom: 1px solid #96b5e1; }
.page form { display: grid; grid-template-columns: 18px 14px 46px 14px 1fr 47px; grid-template-rows: repeat(4, 13px); row-gap: 4px; align-items: center; padding: 5px 6px 0 2px; flex: none; }
.page form .next { padding-left: 11px; }
.page input, .page select { width: 100%; height: 12px; padding-left: 2px; background-color: #fff; border: 1px solid #c3d6ef; }
.page select { background: linear-gradient(45deg, transparent 50%, #567 50%) right 5px top 4px / 2px 2px no-repeat, linear-gradient(-45deg, transparent 50%, #567 50%) right 3px top 4px / 2px 2px no-repeat, #fff; }
.file { grid-column: 2 / -1; display: flex; background: #fff; border: 1px solid #c3d6ef; }
.page .file input { border: 0; height: 10px; flex: 1; }
.file button { width: 12px; color: #47a; }
.read { width: 37px; height: 14px; justify-self: end; border: 1px solid #7f9fcc; border-radius: 2px; background: linear-gradient(#f7faff, #c8daf5); }
.splitter { height: 9px; flex: none; line-height: 9px; text-align: center; color: #357; }
.gridbox { flex: none; display: flex; }
table { flex: 1; border-collapse: collapse; table-layout: fixed; width: 0; }
.c0 { width: 8px; } .c1 { width: 20px; } .c2 { width: 38px; }
th, td { height: 13px; padding: 0 1px; font-weight: normal; text-align: left; overflow: hidden; white-space: nowrap; border: 1px solid #c8d7ec; line-height: 10px; }
th { background: linear-gradient(#edf4ff, #c5daf8); border-color: #9fb9de; }
tbody th { padding: 0; text-align: center; color: #47a; }
thead th { height: 15px; }
td:nth-child(n+4) { text-align: right; }
td:nth-child(-n+3), thead th { padding-left: 2px; }
thead th:nth-child(3) { padding: 0 0 0 1px; }
.filter td { background: #fff; }
.sel td { background: #7b95dc; color: #fff; }
.sel .cur { background: #fff; color: #111; }
.cy td { background: #e0ffff; }
.ye td { background: #ffffe1; }
.vscroll { width: 10px; display: flex; flex-direction: column; align-items: center; background: #edf2f9; font: 6px/8px "DejaVu Sans", sans-serif; }
.vscroll i { width: 7px; height: 9px; margin-top: 2px; border: 1px solid #777; background: repeating-linear-gradient(#fff 0 1px, #9aa 1px 2px); }
.vscroll .down { margin-top: auto; }
.pager { flex: 1; min-height: 0; display: flex; align-items: center; background: #dbe8fa; }
.pager button { width: 9px; font: 6px/9px "DejaVu Sans", sans-serif; color: #89a; }
.pager .act { color: #1d4fae; font-weight: bold; }
.pager > span { padding: 0 5px; background: #f5f9ff; }
.hscroll { flex: 1; display: flex; justify-content: space-between; padding: 0 10px 0 2px; color: #9ab; font-family: "DejaVu Sans", sans-serif; }
```
